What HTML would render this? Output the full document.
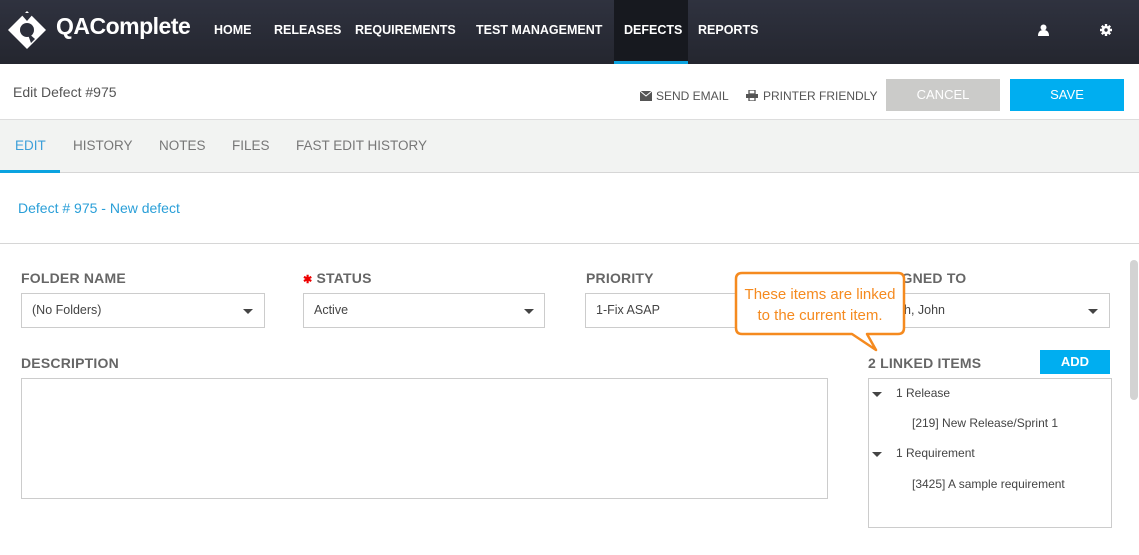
<!DOCTYPE html>
<html><head><meta charset="utf-8"><style>
*{margin:0;padding:0;box-sizing:border-box}
body{width:1139px;height:555px;overflow:hidden;background:#fff;font-family:"Liberation Sans",sans-serif;position:relative;color:#555}
.a{position:absolute;white-space:nowrap}
#hdr{position:absolute;left:0;top:0;width:1139px;height:64px;background:linear-gradient(#2f323f,#24262f)}
.nav{position:absolute;top:23px;color:#fff;font-weight:bold;font-size:12.5px}
.lbl{position:absolute;font-size:14px;font-weight:bold;color:#666;letter-spacing:0.2px}
.box{position:absolute;border:1px solid #ccc;background:#fff}
.sel{position:absolute;border:1px solid #ccc;background:#fff;height:35px;font-size:12.5px;color:#444;padding:9px 10px}
.car{position:absolute;width:0;height:0;border-left:5px solid transparent;border-right:5px solid transparent;border-top:5px solid #444}
.tab{position:absolute;top:138px;font-size:13.5px;color:#777}
.li{position:absolute;font-size:12px;color:#444}
</style></head><body>
<div id="hdr"></div>
<svg class="a" style="left:6px;top:9px" width="42" height="42" viewBox="0 0 42 42">
<path d="M21 2 L40 21 L21 40 L2 21 Z" fill="#fff"/>
<circle cx="21" cy="21" r="7" fill="#2c2f3b"/>
<path d="M14 4 L28 4 L21 12 Z" fill="#2c2f3b"/>
<path d="M21 23 L29 30 L25 34 Z" fill="#2c2f3b"/>
</svg>
<div class="a" style="left:56px;top:13px;color:#fff;font-size:23px;font-weight:bold;letter-spacing:-0.5px">QAComplete</div>
<div class="nav" style="left:214px">HOME</div>
<div class="nav" style="left:274px">RELEASES</div>
<div class="nav" style="left:355px">REQUIREMENTS</div>
<div class="nav" style="left:476px">TEST MANAGEMENT</div>
<div class="a" style="left:614px;top:0;width:74px;height:61px;background:#17191f"></div>
<div class="a" style="left:614px;top:61px;width:74px;height:3px;background:#0ba3e0"></div>
<div class="nav" style="left:624px">DEFECTS</div>
<div class="nav" style="left:698px">REPORTS</div>
<svg class="a" style="left:1038px;top:24px" width="11" height="12" viewBox="0 0 11 12"><circle cx="5.5" cy="3.5" r="3" fill="#fff"/><path d="M0 12 Q0 6 5.5 6 Q11 6 11 12Z" fill="#fff"/></svg>
<svg class="a" style="left:1100px;top:24px" width="12" height="12" viewBox="0 0 12 12"><circle cx="6" cy="6" r="4.3" fill="#fff"/><g stroke="#fff" stroke-width="2.4"><path d="M6 0V12M0 6H12M1.8 1.8L10.2 10.2M10.2 1.8L1.8 10.2"/></g><circle cx="6" cy="6" r="1.7" fill="#2c2f3b"/></svg>

<div class="a" style="left:13px;top:84px;font-size:14px;color:#555">Edit Defect #975</div>
<svg class="a" style="left:640px;top:91px" width="12" height="10" viewBox="0 0 12 10"><rect width="12" height="10" fill="#555"/><path d="M0 0 L6 5 L12 0" stroke="#fff" fill="none" stroke-width="1"/></svg>
<div class="a" style="left:656px;top:89px;font-size:12px;color:#555">SEND EMAIL</div>
<svg class="a" style="left:746px;top:90px" width="12" height="11" viewBox="0 0 12 11"><rect x="3" y="0" width="6" height="4" fill="none" stroke="#555" stroke-width="1.3"/><rect x="0" y="4" width="12" height="4" fill="#555"/><rect x="3" y="7" width="6" height="4" fill="none" stroke="#555" stroke-width="1.3"/></svg>
<div class="a" style="left:763px;top:89px;font-size:12px;color:#555">PRINTER FRIENDLY</div>
<div class="a" style="left:886px;top:79px;width:114px;height:32px;background:#cbcbc9;color:#fff;font-size:13px;text-align:center;line-height:32px">CANCEL</div>
<div class="a" style="left:1010px;top:79px;width:114px;height:32px;background:#00aef0;color:#fff;font-size:13px;text-align:center;line-height:32px">SAVE</div>

<div class="a" style="left:0;top:119px;width:1139px;height:54px;background:#f2f3f2;border-top:1px solid #ddd;border-bottom:1px solid #d6d6d6"></div>
<div class="tab" style="left:15px;color:#3d9fd9">EDIT</div>
<div class="a" style="left:0;top:170px;width:60px;height:3px;background:#0ba3e0"></div>
<div class="tab" style="left:73px">HISTORY</div>
<div class="tab" style="left:159px">NOTES</div>
<div class="tab" style="left:232px">FILES</div>
<div class="tab" style="left:296px">FAST EDIT HISTORY</div>

<div class="a" style="left:18px;top:200px;font-size:14px;color:#2a9fd8">Defect # 975 - New defect</div>
<div class="a" style="left:0;top:243px;width:1139px;height:1px;background:#d6d6d6"></div>
<div class="a" style="left:1130px;top:260px;width:8px;height:140px;background:#d3d3d3;border-radius:4px"></div>

<div class="lbl" style="left:21px;top:270px">FOLDER NAME</div>
<div class="lbl" style="left:303px;top:270px"><span style="color:#e00;font-size:11px">✱</span> STATUS</div>
<div class="lbl" style="left:586px;top:270px">PRIORITY</div>
<div class="lbl" style="left:868px;top:270px">ASSIGNED TO</div>
<div class="sel" style="left:21px;top:293px;width:244px">(No Folders)</div><div class="car" style="left:243px;top:309px"></div>
<div class="sel" style="left:303px;top:293px;width:242px">Active</div><div class="car" style="left:524px;top:309px"></div>
<div class="sel" style="left:585px;top:293px;width:245px">1-Fix ASAP</div>
<div class="sel" style="left:868px;top:293px;width:242px">Smith, John</div><div class="car" style="left:1088px;top:309px"></div>

<div class="lbl" style="left:21px;top:355px">DESCRIPTION</div>
<div class="box" style="left:21px;top:378px;width:807px;height:121px"></div>
<div class="lbl" style="left:868px;top:355px">2 LINKED ITEMS</div>
<div class="a" style="left:1040px;top:350px;width:70px;height:24px;background:#00aef0;color:#fff;font-weight:bold;font-size:13px;text-align:center;line-height:24px">ADD</div>
<div class="box" style="left:868px;top:378px;width:244px;height:150px"></div>
<div class="car" style="left:872px;top:392px"></div>
<div class="li" style="left:896px;top:386px">1 Release</div>
<div class="li" style="left:912px;top:416px">[219] New Release/Sprint 1</div>
<div class="car" style="left:872px;top:452px"></div>
<div class="li" style="left:896px;top:446px">1 Requirement</div>
<div class="li" style="left:912px;top:477px">[3425] A sample requirement</div>

<svg class="a" style="left:734px;top:271px" width="175" height="82" viewBox="0 0 175 82">
<path d="M8 2 H164 Q170 2 170 8 V57 Q170 63 164 63 H133 L142 79 L118 63 H8 Q2 63 2 57 V8 Q2 2 8 2 Z" fill="#fff" stroke="#f58a1f" stroke-width="2.5" stroke-linejoin="round"/>
<text x="86" y="28" text-anchor="middle" font-family="Liberation Sans, sans-serif" font-size="15" fill="#f58a1f">These items are linked</text>
<text x="86" y="49" text-anchor="middle" font-family="Liberation Sans, sans-serif" font-size="15" fill="#f58a1f">to the current item.</text>
</svg>
</body></html>
